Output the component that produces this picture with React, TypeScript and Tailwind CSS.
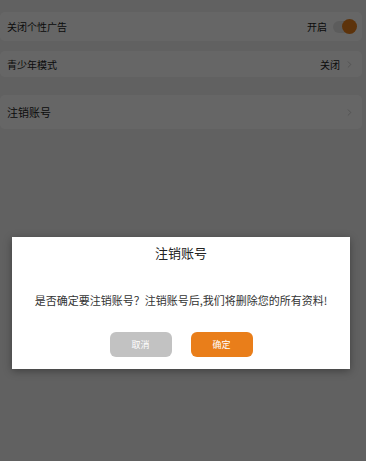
import { ChevronRight } from 'lucide-react';

const font = { fontFamily: '"Noto Sans CJK SC", "Liberation Sans", sans-serif' };

function Row({ label, children, className }: { label: string; children?: React.ReactNode; className?: string }) {
  return (
    <div className={`mr-[4px] flex items-center justify-between rounded-[5px] bg-white pl-[7px] pr-[7px] ${className ?? ''}`}>
      <span className="text-[#222]">{label}</span>
      <div className="flex items-center gap-[4px]">{children}</div>
    </div>
  );
}

export default function App() {
  return (
    <div className="relative h-[461px] w-[366px] overflow-hidden bg-[#f2f2f2]" style={font}>
      <div className="flex flex-col pt-[12px]">
        <Row label="关闭个性广告" className="h-[29px] text-[10px]">
          <span className="text-[10px] text-[#222]">开启</span>
          <div className="relative ml-[2px] flex h-[12px] w-[22px] items-center rounded-full bg-[#e6e6e6]">
            <div className="absolute right-[-2px] h-[15px] w-[15px] rounded-full bg-[#e8801c]" />
          </div>
        </Row>
        <Row label="青少年模式" className="mt-[10px] h-[26px] text-[10px]">
          <span className="text-[10px] text-[#222]">关闭</span>
          <ChevronRight size={11} strokeWidth={1.5} className="text-[#bbb]" />
        </Row>
        <Row label="注销账号" className="mt-[18px] h-[34px] text-[11px]">
          <ChevronRight size={11} strokeWidth={1.5} className="text-[#bbb]" />
        </Row>
      </div>

      <div className="absolute inset-0 flex flex-col bg-black/60 pl-[12px] pt-[237px]">
        <div className="flex h-[132px] w-[338px] flex-col items-center bg-white shadow-[0_2px_8px_rgba(0,0,0,0.35)]">
          <div className="mt-[6px] text-[13px] leading-[20px] text-[#222]">注销账号</div>
          <div className="mt-[29px] text-[11px] leading-[16px] text-[#333]">是否确定要注销账号？注销账号后,我们将删除您的所有资料!</div>
          <div className="mt-[24px] flex gap-[19px]">
            <button className="h-[25px] w-[62px] rounded-[6px] bg-[#c2c2c2] text-[9px] text-white">取消</button>
            <button className="h-[25px] w-[62px] rounded-[6px] bg-[#e97e1a] text-[9px] text-white">确定</button>
          </div>
        </div>
      </div>
    </div>
  );
}
